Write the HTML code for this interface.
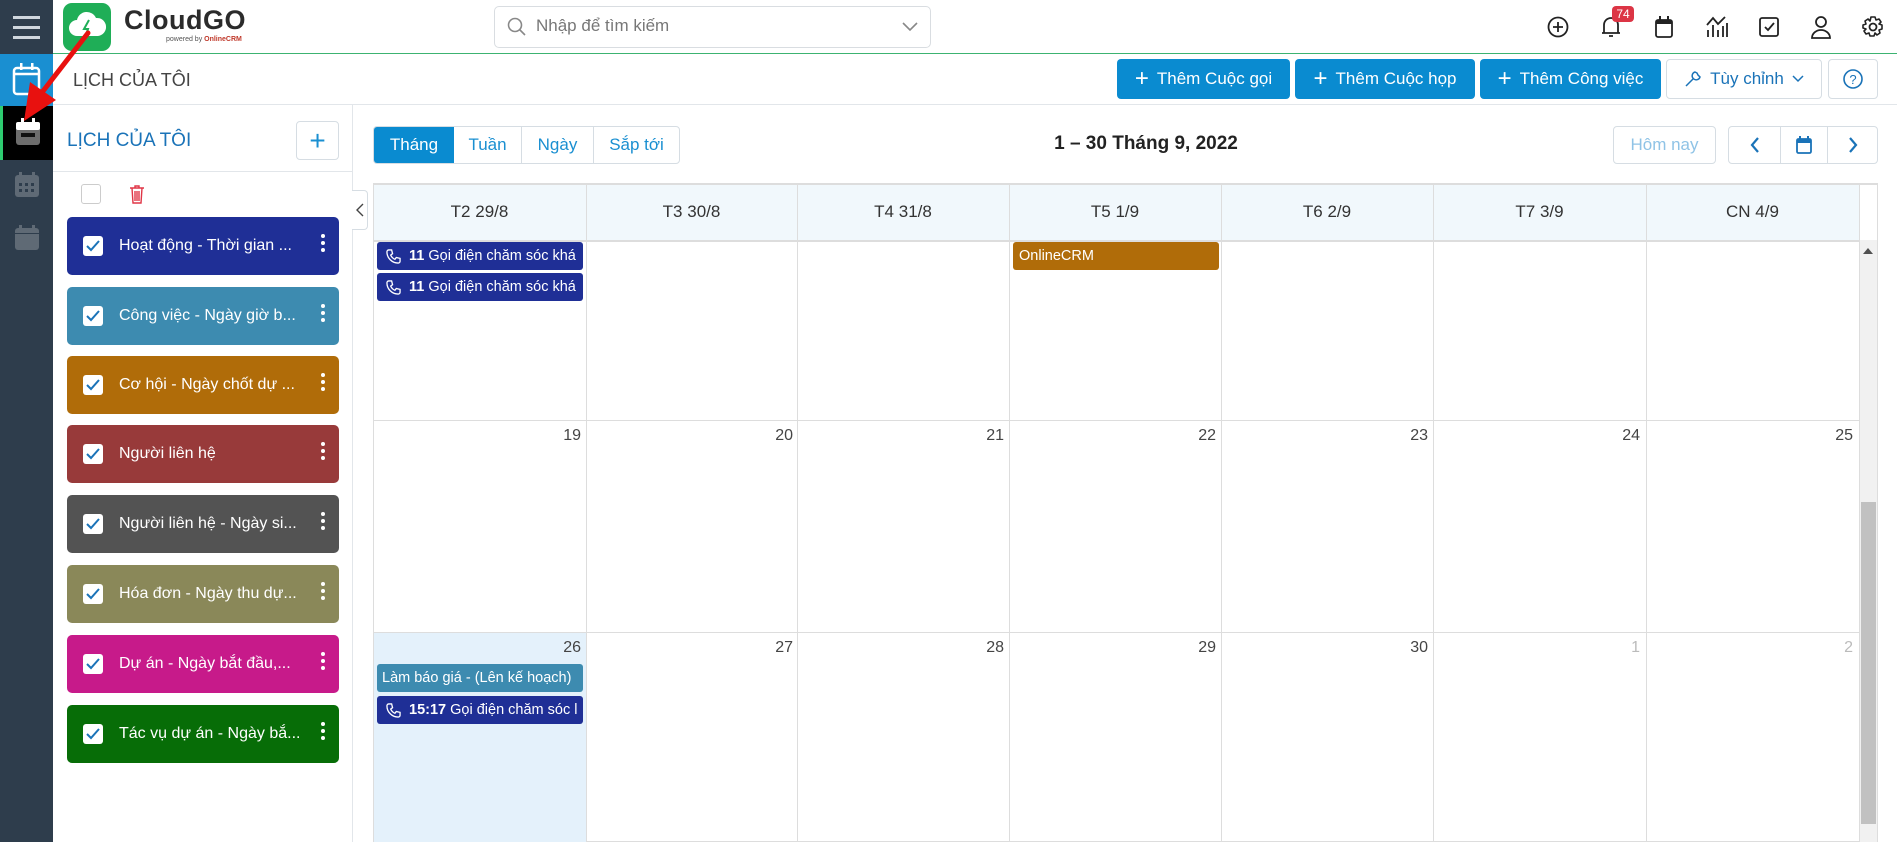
<!DOCTYPE html>
<html><head><meta charset="utf-8"><style>
*{box-sizing:border-box;margin:0;padding:0}
body{width:1897px;height:842px;overflow:hidden;background:#fff;font-family:"Liberation Sans","DejaVu Sans",sans-serif;color:#333;position:relative;font-size:16px}
.abs{position:absolute}
.side{left:0;top:0;width:53px;height:842px;background:#2e3d4c}
.top{left:53px;top:0;width:1844px;height:54px;background:#fff;border-bottom:1px solid #3cb371}
.btn{position:absolute;top:59px;height:40px;background:#0a8bd0;color:#fff;border-radius:4px;display:flex;align-items:center;justify-content:center;font-size:17px;gap:8px}
.obtn{position:absolute;border:1px solid #d6dde3;border-radius:4px;background:#fff;display:flex;align-items:center;justify-content:center}
.item{position:absolute;left:67px;width:272px;height:58px;border-radius:5px;color:#fff;font-size:16px;display:flex;align-items:center}
.item .cb{width:20px;height:20px;background:#fff;border-radius:3px;margin-left:16px;margin-right:16px;display:flex;align-items:center;justify-content:center}
.item .dots{position:absolute;right:14px;top:17px;width:4px}
.item .dots i{display:block;width:4px;height:4px;background:#fff;border-radius:2px;margin-bottom:3px}
.col{position:absolute;top:183px;width:1px;height:659px;background:#ddd}
.hd{position:absolute;top:183px;height:57px;display:flex;align-items:center;justify-content:center;font-size:17px;color:#333}
.row{position:absolute;left:373px;width:1486px;height:1px;background:#ddd}
.num{position:absolute;font-size:16px;color:#444;text-align:right;width:60px}
.ev{position:absolute;height:28px;border-radius:3px;color:#fff;font-size:14.5px;display:flex;align-items:center;white-space:nowrap;overflow:hidden}
</style></head><body>
<div class="abs side"></div>
<!-- hamburger -->
<div class="abs" style="left:13px;top:16px;width:27px;height:3px;background:#cfd6dd;box-shadow:0 10px 0 #cfd6dd,0 20px 0 #cfd6dd"></div>
<div class="abs" style="left:0;top:54px;width:53px;height:52px;background:#1a8fd1"></div>
<svg class="abs" style="left:12px;top:62px" width="29" height="34" viewBox="0 0 29 34"><rect x="2" y="6" width="25" height="26" rx="3" fill="none" stroke="#fff" stroke-width="2.5"/><line x1="2" y1="12" x2="27" y2="12" stroke="#fff" stroke-width="2.5"/><rect x="8" y="1" width="2.5" height="7" fill="#fff"/><rect x="19" y="1" width="2.5" height="7" fill="#fff"/></svg>
<div class="abs" style="left:0;top:106px;width:53px;height:54px;background:#000;border-left:3px solid #2ecc71"></div>
<svg class="abs" style="left:16px;top:118px" width="24" height="28" viewBox="0 0 24 28"><rect x="0" y="4" width="24" height="23" rx="3" fill="#6d6d6d"/><rect x="0" y="4" width="24" height="8" rx="2" fill="#fff"/><rect x="5" y="15" width="14" height="4" fill="#111"/><rect x="5" y="0" width="3" height="7" fill="#fff"/><rect x="16" y="0" width="3" height="7" fill="#fff"/></svg>
<svg class="abs" style="left:15px;top:172px" width="24" height="26" viewBox="0 0 24 26"><rect x="0" y="3" width="24" height="22" rx="3" fill="#5f6a75"/><rect x="4" y="0" width="3" height="6" fill="#5f6a75"/><rect x="17" y="0" width="3" height="6" fill="#5f6a75"/><g fill="#2e3d4c"><rect x="4" y="11" width="3" height="3"/><rect x="10" y="11" width="3" height="3"/><rect x="16" y="11" width="3" height="3"/><rect x="4" y="17" width="3" height="3"/><rect x="10" y="17" width="3" height="3"/><rect x="16" y="17" width="3" height="3"/></g></svg>
<svg class="abs" style="left:15px;top:225px" width="24" height="26" viewBox="0 0 24 26"><rect x="0" y="3" width="24" height="22" rx="3" fill="#5f6a75"/><rect x="4" y="0" width="3" height="6" fill="#5f6a75"/><rect x="17" y="0" width="3" height="6" fill="#5f6a75"/><rect x="0" y="8" width="24" height="1" fill="#2e3d4c"/></svg>

<div class="abs top"></div>
<!-- logo -->
<div class="abs" style="left:63px;top:3px;width:48px;height:48px;background:#1fae57;border-radius:9px"></div>
<svg class="abs" style="left:67px;top:10px" width="40" height="32" viewBox="0 0 40 32"><path d="M10 26 a8 8 0 0 1 0-16 a10 10 0 0 1 19-2 a7 7 0 0 1 2 18z" fill="#fff"/><path d="M22 10 l-5 9 h4 l-3 9" stroke="#1fae57" stroke-width="2" fill="none"/></svg>
<div class="abs" style="left:124px;top:5px;font-size:27px;font-weight:bold;color:#2b2b2b;letter-spacing:0.5px">CloudGO</div>
<div class="abs" style="left:166px;top:36px;font-size:7px;color:#555">powered by <b style="color:#c0392b">OnlineCRM</b></div>
<!-- search -->
<div class="abs" style="left:494px;top:6px;width:437px;height:42px;border:1px solid #d9dde1;border-radius:5px"></div>
<svg class="abs" style="left:507px;top:17px" width="20" height="20" viewBox="0 0 20 20"><circle cx="8" cy="8" r="6.5" fill="none" stroke="#888" stroke-width="1.6"/><line x1="13" y1="13" x2="18" y2="18" stroke="#888" stroke-width="1.6"/></svg>
<div class="abs" style="left:536px;top:16px;font-size:17px;color:#777">Nhập để tìm kiếm</div>
<svg class="abs" style="left:902px;top:22px" width="16" height="10" viewBox="0 0 16 10"><path d="M1 1 L8 8 L15 1" fill="none" stroke="#888" stroke-width="1.6"/></svg>
<!-- top icons -->
<svg class="abs" style="left:1547px;top:16px" width="22" height="22" viewBox="0 0 22 22"><circle cx="11" cy="11" r="9.5" fill="none" stroke="#222" stroke-width="1.8"/><path d="M11 6v10M6 11h10" stroke="#222" stroke-width="1.8"/></svg>
<svg class="abs" style="left:1601px;top:15px" width="20" height="24" viewBox="0 0 20 24"><path d="M3 18 V10 a7 7 0 0 1 14 0 V18 Z M1 18 H19 M8 21 h4" fill="none" stroke="#222" stroke-width="1.8"/></svg>
<div class="abs" style="left:1612px;top:6px;width:22px;height:16px;background:#dc3545;color:#fff;font-size:12px;border-radius:4px;text-align:center;line-height:16px">74</div>
<svg class="abs" style="left:1655px;top:16px" width="18" height="22" viewBox="0 0 18 22"><rect x="1" y="4" width="16" height="17" rx="2" fill="none" stroke="#222" stroke-width="1.8"/><rect x="1" y="4" width="16" height="4" fill="#222"/><rect x="4" y="0" width="2" height="5" fill="#222"/><rect x="12" y="0" width="2" height="5" fill="#222"/></svg>
<svg class="abs" style="left:1705px;top:15px" width="24" height="24" viewBox="0 0 24 24"><path d="M2 10 L8 3 L13 9 L20 2" fill="none" stroke="#222" stroke-width="1.8"/><path d="M3 22V15M8 22V10M13 22V15M18 22V11M22 22V8" stroke="#222" stroke-width="1.8"/></svg>
<svg class="abs" style="left:1759px;top:17px" width="20" height="20" viewBox="0 0 20 20"><rect x="1" y="1" width="18" height="18" rx="2" fill="none" stroke="#222" stroke-width="1.8"/><path d="M6 10 l3 3 l6-7" fill="none" stroke="#222" stroke-width="1.8"/></svg>
<svg class="abs" style="left:1810px;top:15px" width="22" height="24" viewBox="0 0 22 24"><circle cx="11" cy="7" r="5" fill="none" stroke="#222" stroke-width="1.8"/><path d="M2 23 a9 8 0 0 1 18 0 Z" fill="none" stroke="#222" stroke-width="1.8"/></svg>
<svg class="abs" style="left:1862px;top:16px" width="22" height="22" viewBox="0 0 22 22"><circle cx="11" cy="11" r="3.5" fill="none" stroke="#222" stroke-width="1.8"/><path d="M9 1h4l1 3 3-1 2 3-2 2 3 1v4l-3 1 1 3-3 2-2-2-1 3h-4l-1-3-3 1-2-3 2-2-3-1V9l3-1-1-3 3-2 2 2z" fill="none" stroke="#222" stroke-width="1.6" stroke-linejoin="round"/></svg>

<!-- second bar -->
<div class="abs" style="left:73px;top:70px;font-size:18px;color:#444">LỊCH CỦA TÔI</div>
<div class="btn" style="left:1117px;width:173px"><span style="font-size:24px;font-weight:300">+</span>Thêm Cuộc gọi</div>
<div class="btn" style="left:1295px;width:180px"><span style="font-size:24px;font-weight:300">+</span>Thêm Cuộc họp</div>
<div class="btn" style="left:1480px;width:181px"><span style="font-size:24px;font-weight:300">+</span>Thêm Công việc</div>
<div class="obtn" style="left:1666px;top:59px;width:156px;height:40px;color:#1a73b8;font-size:17px;gap:8px">
<svg width="18" height="18" viewBox="0 0 18 18"><path d="M2 16 L9 9 M11 2 a4 4 0 1 0 5 5 l-2 -2 l-1 -2 z" fill="none" stroke="#1a73b8" stroke-width="1.5"/></svg>Tùy chỉnh <svg width="12" height="8" viewBox="0 0 12 8"><path d="M1 1l5 5 5-5" fill="none" stroke="#1a73b8" stroke-width="1.5"/></svg></div>
<div class="obtn" style="left:1828px;top:59px;width:50px;height:40px"><svg width="22" height="22" viewBox="0 0 22 22"><circle cx="11" cy="11" r="9" fill="none" stroke="#1a73b8" stroke-width="1.6"/><text x="11" y="16" font-size="13" text-anchor="middle" fill="#1a73b8" font-family="Liberation Sans">?</text></svg></div>
<div class="abs" style="left:53px;top:104px;width:1844px;height:1px;background:#e2e6ea"></div>

<!-- left panel -->
<div class="abs" style="left:352px;top:105px;width:1px;height:737px;background:#e2e6ea"></div>
<div class="abs" style="left:67px;top:130px;font-size:19px;color:#1a73b8">LỊCH CỦA TÔI</div>
<div class="obtn" style="left:296px;top:121px;width:43px;height:39px;color:#1a8fd1;font-size:28px;font-weight:300">+</div>
<div class="abs" style="left:53px;top:171px;width:299px;height:1px;background:#e2e6ea"></div>
<div class="abs" style="left:81px;top:184px;width:20px;height:20px;border:1px solid #ccc;border-radius:3px"></div>
<svg class="abs" style="left:129px;top:184px" width="16" height="20" viewBox="0 0 16 20"><path d="M1 4h14M6 4V2h4v2M3 4l1 15h8l1-15M6 7v10M8 7v10M10 7v10" fill="none" stroke="#e03546" stroke-width="1.4"/></svg>

<div class="item" style="top:217px;background:#1f2f96"><div class="cb"><svg width="14" height="12"><path d="M1 6l4 4 8-9" fill="none" stroke="#1a73b8" stroke-width="2"/></svg></div>Hoạt động - Thời gian ...<div class="dots"><i></i><i></i><i></i></div></div>
<div class="item" style="top:287px;background:#3d8bb0"><div class="cb"><svg width="14" height="12"><path d="M1 6l4 4 8-9" fill="none" stroke="#1a73b8" stroke-width="2"/></svg></div>Công việc - Ngày giờ b...<div class="dots"><i></i><i></i><i></i></div></div>
<div class="item" style="top:356px;background:#b06c09"><div class="cb"><svg width="14" height="12"><path d="M1 6l4 4 8-9" fill="none" stroke="#1a73b8" stroke-width="2"/></svg></div>Cơ hội - Ngày chốt dự ...<div class="dots"><i></i><i></i><i></i></div></div>
<div class="item" style="top:425px;background:#983a3a"><div class="cb"><svg width="14" height="12"><path d="M1 6l4 4 8-9" fill="none" stroke="#1a73b8" stroke-width="2"/></svg></div>Người liên hệ<div class="dots"><i></i><i></i><i></i></div></div>
<div class="item" style="top:495px;background:#535353"><div class="cb"><svg width="14" height="12"><path d="M1 6l4 4 8-9" fill="none" stroke="#1a73b8" stroke-width="2"/></svg></div>Người liên hệ - Ngày si...<div class="dots"><i></i><i></i><i></i></div></div>
<div class="item" style="top:565px;background:#8a8859"><div class="cb"><svg width="14" height="12"><path d="M1 6l4 4 8-9" fill="none" stroke="#1a73b8" stroke-width="2"/></svg></div>Hóa đơn - Ngày thu dự...<div class="dots"><i></i><i></i><i></i></div></div>
<div class="item" style="top:635px;background:#c71a8a"><div class="cb"><svg width="14" height="12"><path d="M1 6l4 4 8-9" fill="none" stroke="#1a73b8" stroke-width="2"/></svg></div>Dự án - Ngày bắt đầu,...<div class="dots"><i></i><i></i><i></i></div></div>
<div class="item" style="top:705px;background:#076d07"><div class="cb"><svg width="14" height="12"><path d="M1 6l4 4 8-9" fill="none" stroke="#1a73b8" stroke-width="2"/></svg></div>Tác vụ dự án - Ngày bắ...<div class="dots"><i></i><i></i><i></i></div></div>

<!-- collapse tab -->
<div class="obtn" style="left:352px;top:190px;width:16px;height:40px;border-left:none;border-radius:0 4px 4px 0"><svg width="8" height="14"><path d="M7 1L1 7l6 6" fill="none" stroke="#444" stroke-width="1.4"/></svg></div>

<!-- tabs -->
<div class="abs" style="left:373px;top:126px;width:307px;height:38px;border:1px solid #d6dde3;border-radius:4px;display:flex;font-size:17px;color:#1a8fd1;overflow:hidden">
<div style="width:80px;background:#0a8bd0;color:#fff;display:flex;align-items:center;justify-content:center">Tháng</div>
<div style="width:68px;border-right:1px solid #d6dde3;display:flex;align-items:center;justify-content:center">Tuần</div>
<div style="width:72px;border-right:1px solid #d6dde3;display:flex;align-items:center;justify-content:center">Ngày</div>
<div style="flex:1;display:flex;align-items:center;justify-content:center">Sắp tới</div></div>
<div class="abs" style="left:946px;top:133px;width:400px;text-align:center;font-size:19px;font-weight:bold;color:#222">1 – 30 Tháng 9, 2022</div>
<div class="obtn" style="left:1613px;top:126px;width:103px;height:38px;color:#8fc3e6;font-size:17px">Hôm nay</div>
<div class="obtn" style="left:1728px;top:126px;width:150px;height:38px;justify-content:flex-start">
<div style="width:52px;height:100%;border-right:1px solid #d6dde3;display:flex;align-items:center;justify-content:center"><svg width="10" height="16"><path d="M8 1L2 8l6 7" fill="none" stroke="#1a73b8" stroke-width="2.2"/></svg></div>
<div style="width:47px;height:100%;border-right:1px solid #d6dde3;display:flex;align-items:center;justify-content:center"><svg width="16" height="18" viewBox="0 0 16 18"><rect x="1" y="3" width="14" height="14" rx="1.5" fill="none" stroke="#1a73b8" stroke-width="1.8"/><rect x="1" y="3" width="14" height="4" fill="#1a73b8"/><rect x="3" y="0" width="2" height="4" fill="#1a73b8"/><rect x="11" y="0" width="2" height="4" fill="#1a73b8"/></svg></div>
<div style="flex:1;height:100%;display:flex;align-items:center;justify-content:center"><svg width="10" height="16"><path d="M2 1l6 7-6 7" fill="none" stroke="#1a73b8" stroke-width="2.2"/></svg></div></div>

<!-- grid -->
<div class="abs" style="left:373px;top:183px;width:1505px;height:659px;border:1px solid #ddd;border-top:2px solid #ddd"></div>
<div class="abs" style="left:374px;top:185px;width:1485px;height:55px;background:#f1f8fc"></div>
<div class="abs" style="left:374px;top:632px;width:212px;height:210px;background:#e4f1fb"></div>
<div class="abs" style="left:1859px;top:240px;width:18px;height:602px;background:#f1f1f1;border-left:1px solid #ddd"></div>
<div class="abs" style="left:1861px;top:502px;width:15px;height:322px;background:#c1c1c1"></div>
<svg class="abs" style="left:1863px;top:248px" width="10" height="6"><path d="M0 6L5 0l5 6z" fill="#505050"/></svg>
<div class="row" style="top:240px;height:2px"></div>
<div class="row" style="top:420px"></div>
<div class="row" style="top:632px"></div>
<div class="col" style="left:586px"></div><div class="col" style="left:797px"></div><div class="col" style="left:1009px"></div><div class="col" style="left:1221px"></div><div class="col" style="left:1433px"></div><div class="col" style="left:1646px"></div><div class="col" style="left:1859px;height:57px"></div>
<div class="hd" style="left:373px;width:213px">T2 29/8</div>
<div class="hd" style="left:586px;width:211px">T3 30/8</div>
<div class="hd" style="left:797px;width:212px">T4 31/8</div>
<div class="hd" style="left:1009px;width:212px">T5 1/9</div>
<div class="hd" style="left:1221px;width:212px">T6 2/9</div>
<div class="hd" style="left:1433px;width:213px">T7 3/9</div>
<div class="hd" style="left:1646px;width:213px">CN 4/9</div>

<div class="num" style="left:521px;top:427px">19</div>
<div class="num" style="left:733px;top:427px">20</div>
<div class="num" style="left:944px;top:427px">21</div>
<div class="num" style="left:1156px;top:427px">22</div>
<div class="num" style="left:1368px;top:427px">23</div>
<div class="num" style="left:1580px;top:427px">24</div>
<div class="num" style="left:1793px;top:427px">25</div>
<div class="num" style="left:521px;top:639px">26</div>
<div class="num" style="left:733px;top:639px">27</div>
<div class="num" style="left:944px;top:639px">28</div>
<div class="num" style="left:1156px;top:639px">29</div>
<div class="num" style="left:1368px;top:639px">30</div>
<div class="num" style="left:1580px;top:639px;color:#bbb">1</div>
<div class="num" style="left:1793px;top:639px;color:#bbb">2</div>

<div class="ev" style="left:377px;top:242px;width:206px;background:#1f2f96"><svg style="margin:0 8px 0 9px" width="15" height="15" viewBox="0 0 16 16"><path d="M3 1l3 0 1 4-2 1.5a9 9 0 0 0 4.5 4.5L11 9l4 1v3a2 2 0 0 1-2 2A12 12 0 0 1 1 3a2 2 0 0 1 2-2z" fill="none" stroke="#fff" stroke-width="1.4"/></svg><b>11</b>&nbsp;Gọi điện chăm sóc khá</div>
<div class="ev" style="left:377px;top:273px;width:206px;background:#1f2f96"><svg style="margin:0 8px 0 9px" width="15" height="15" viewBox="0 0 16 16"><path d="M3 1l3 0 1 4-2 1.5a9 9 0 0 0 4.5 4.5L11 9l4 1v3a2 2 0 0 1-2 2A12 12 0 0 1 1 3a2 2 0 0 1 2-2z" fill="none" stroke="#fff" stroke-width="1.4"/></svg><b>11</b>&nbsp;Gọi điện chăm sóc khá</div>
<div class="ev" style="left:1013px;top:242px;width:206px;background:#b06c09;padding-left:6px">OnlineCRM</div>
<div class="ev" style="left:377px;top:664px;width:206px;background:#3d8bb0;padding-left:5px">Làm báo giá - (Lên kế hoạch)</div>
<div class="ev" style="left:377px;top:696px;width:206px;background:#1f2f96"><svg style="margin:0 8px 0 9px" width="15" height="15" viewBox="0 0 16 16"><path d="M3 1l3 0 1 4-2 1.5a9 9 0 0 0 4.5 4.5L11 9l4 1v3a2 2 0 0 1-2 2A12 12 0 0 1 1 3a2 2 0 0 1 2-2z" fill="none" stroke="#fff" stroke-width="1.4"/></svg><b>15:17</b>&nbsp;Gọi điện chăm sóc l</div>

<!-- red arrow -->
<svg class="abs" style="left:0;top:0" width="120" height="140" viewBox="0 0 120 140"><path d="M88 33 L40 95" stroke="#e8110f" stroke-width="5" stroke-linecap="round"/><path d="M24 121 L30 82 L56 100 Z" fill="#e8110f"/></svg>
</body></html>
